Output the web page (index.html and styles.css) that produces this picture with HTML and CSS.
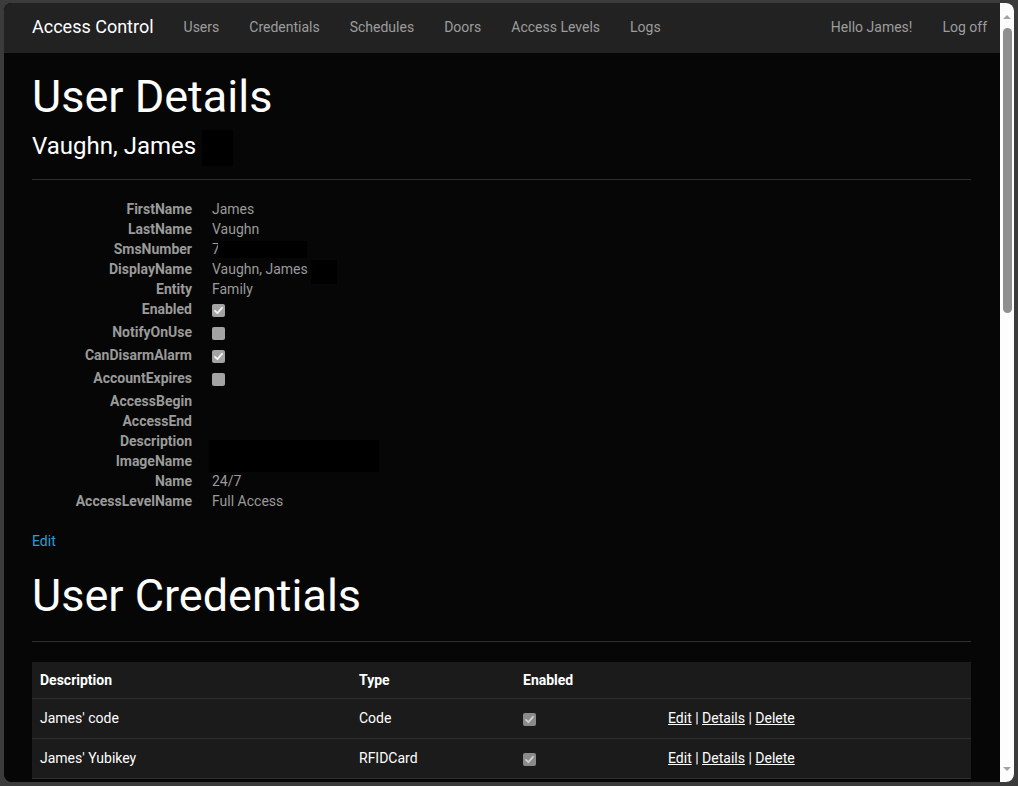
FILE: index.html
```html
<!DOCTYPE html>
<html lang="en">
<head>
<meta charset="utf-8">
<title>User Details - Access Control</title>
<link rel="stylesheet" href="styles.css">
</head>
<body>
<div class="window">
  <div class="page">
    <nav class="navbar">
      <a class="brand" href="#">Access Control</a>
      <ul class="nav">
        <li><a href="#">Users</a></li>
        <li><a href="#">Credentials</a></li>
        <li><a href="#">Schedules</a></li>
        <li><a href="#">Doors</a></li>
        <li><a href="#">Access Levels</a></li>
        <li><a href="#">Logs</a></li>
      </ul>
      <ul class="nav nav-right">
        <li><a href="#">Hello James!</a></li>
        <li><a href="#">Log off</a></li>
      </ul>
    </nav>
    <main class="container">
      <h1 class="title title-1">User Details</h1>
      <h3 class="subtitle">Vaughn, James <span class="redact redact-name"></span></h3>
      <hr class="rule">
      <dl class="details">
        <dt>FirstName</dt><dd>James</dd>
        <dt>LastName</dt><dd>Vaughn</dd>
        <dt>SmsNumber</dt><dd>7<span class="redact redact-sms"></span></dd>
        <dt>DisplayName</dt><dd>Vaughn, James<span class="redact redact-display"></span></dd>
        <dt>Entity</dt><dd>Family</dd>
        <dt class="cb-row">Enabled</dt><dd class="cb-row"><span class="check checked"><svg viewBox="0 0 13 13"><polyline points="3,6.8 5.4,9.2 10,3.8"/></svg></span></dd>
        <dt class="cb-row">NotifyOnUse</dt><dd class="cb-row"><span class="check"></span></dd>
        <dt class="cb-row">CanDisarmAlarm</dt><dd class="cb-row"><span class="check checked"><svg viewBox="0 0 13 13"><polyline points="3,6.8 5.4,9.2 10,3.8"/></svg></span></dd>
        <dt class="cb-row">AccountExpires</dt><dd class="cb-row"><span class="check"></span></dd>
        <dt>AccessBegin</dt><dd></dd>
        <dt>AccessEnd</dt><dd></dd>
        <dt>Description</dt><dd class="desc"><span class="redact redact-desc"></span></dd>
        <dt>ImageName</dt><dd></dd>
        <dt>Name</dt><dd>24/7</dd>
        <dt>AccessLevelName</dt><dd>Full Access</dd>
      </dl>
      <p class="edit-line"><a class="link" href="#">Edit</a></p>
      <h1 class="title title-2">User Credentials</h1>
      <hr class="rule">
      <table class="creds">
        <thead>
          <tr><th class="c-desc">Description</th><th class="c-type">Type</th><th class="c-en">Enabled</th><th class="c-act"></th></tr>
        </thead>
        <tbody>
          <tr>
            <td>James' code</td><td>Code</td>
            <td><span class="check small checked"><svg viewBox="0 0 13 13"><polyline points="3,6.8 5.4,9.2 10,3.8"/></svg></span></td>
            <td><a href="#">Edit</a> | <a href="#">Details</a> | <a href="#">Delete</a></td>
          </tr>
          <tr>
            <td>James' Yubikey</td><td>RFIDCard</td>
            <td><span class="check small checked"><svg viewBox="0 0 13 13"><polyline points="3,6.8 5.4,9.2 10,3.8"/></svg></span></td>
            <td><a href="#">Edit</a> | <a href="#">Details</a> | <a href="#">Delete</a></td>
          </tr>
        </tbody>
      </table>
    </main>
  </div>
  <div class="scrollbar">
    <span class="arrow arrow-up"></span>
    <span class="thumb"></span>
    <span class="arrow arrow-down"></span>
  </div>
</div>
</body>
</html>
```
FILE: styles.css
```css
* { box-sizing: border-box; }

html, body {
  margin: 0;
  padding: 0;
  height: 100%;
}

body {
  background: #3b3b3b;
  font-family: Roboto, "Liberation Sans", Arial, sans-serif;
  font-size: 14px;
  line-height: 20px;
  color: #999;
  padding: 3px 4px 4px 4px;
}

.window {
  display: flex;
  height: 779px;
  width: 1010px;
  border-radius: 8px;
  overflow: hidden;
  background: #060606;
}

.page {
  flex: 1;
  overflow: hidden;
  background: #060606;
}

/* navbar */
.navbar {
  height: 50px;
  background: #222;
  display: flex;
  align-items: flex-start;
  padding-left: 28px;
}

.brand {
  color: #fff;
  font-size: 18px;
  text-decoration: none;
  padding-right: 15px;
  line-height: 48px;
}

.nav {
  list-style: none;
  margin: 0;
  padding: 0;
  display: flex;
}

.nav a {
  display: block;
  padding: 0 15px;
  line-height: 48px;
  color: #9d9d9d;
  text-decoration: none;
  font-size: 14px;
}

.nav-right {
  margin-left: auto;
  margin-right: -2px;
}

/* content */
.container {
  padding: 0 29px 0 28px;
}

.title {
  font-size: 45px;
  font-weight: 400;
  line-height: 1.1;
  color: #fff;
  margin: 19px 0 10px;
}

.title-1 {
  margin-bottom: 11px;
}

.title-2 {
  margin-top: 20px;
  margin-bottom: 11px;
}

.subtitle {
  position: relative;
  font-size: 24px;
  font-weight: 400;
  line-height: 1.1;
  color: #fff;
  margin: 0;
}

.rule {
  border: 0;
  border-top: 1px solid #2f2f2f;
  margin: 20px 0;
  height: 0;
}

.title-2 + .rule {
  margin-top: 21px;
}

.redact {
  background: #000;
  display: inline-block;
  position: absolute;
}

.redact-name {
  left: 170px;
  top: -3px;
  width: 31px;
  height: 36px;
}

/* details list */
.details {
  display: grid;
  grid-template-columns: 160px 1fr;
  column-gap: 20px;
  margin: -1px 0 20px;
}

.details dt {
  font-weight: 700;
  text-align: right;
  color: #9a9a9a;
  height: 20px;
}

.details dd {
  margin: 0;
  height: 20px;
  position: relative;
  color: #9a9a9a;
}

.details .cb-row {
  height: 23px;
}

.redact-sms {
  left: 6px;
  top: 2px;
  width: 89px;
  height: 17px;
}

.redact-display {
  left: 99px;
  top: 1px;
  width: 26px;
  height: 24px;
}

.redact-desc {
  left: -3px;
  top: 9px;
  width: 170px;
  height: 32px;
}

.check {
  display: block;
  width: 13px;
  height: 13px;
  margin-top: 5px;
  background: #a3a3a3;
  border-radius: 2px;
}

.check svg {
  display: block;
  width: 13px;
  height: 13px;
}

.check polyline {
  fill: none;
  stroke: #f4f4f4;
  stroke-width: 1.8;
  stroke-linecap: round;
  stroke-linejoin: round;
}

.check.small {
  display: inline-block;
  vertical-align: middle;
  margin-top: 0;
  background: #8a8a8a;
}

.check.small polyline {
  stroke: #d0d0d0;
}

.edit-line {
  margin: 0;
  line-height: 20px;
}

.link {
  color: #2a9fd6;
  text-decoration: none;
}

/* table */
.creds {
  width: 100%;
  table-layout: fixed;
  border-collapse: collapse;
  background: #1b1b1b;
  color: #fff;
}

.creds th {
  text-align: left;
  font-weight: 700;
  padding: 8px;
  line-height: 20px;
  border-bottom: 1px solid #2e2e2e;
}

.creds td {
  padding: 9px 8px 10px;
  line-height: 20px;
  border-bottom: 1px solid #2e2e2e;
  vertical-align: middle;
}

.creds td a {
  color: #fff;
  text-decoration: underline;
}

.c-desc { width: 319px; }
.c-type { width: 164px; }
.c-en { width: 145px; }
.c-act { width: 311px; }

/* scrollbar */
.scrollbar {
  width: 14px;
  background: #fdfdfd;
  position: relative;
  display: flex;
  flex-direction: column;
  align-items: center;
}

.arrow {
  width: 0;
  height: 0;
  border-left: 4px solid transparent;
  border-right: 4px solid transparent;
}

.arrow-up {
  border-bottom: 4px solid #a3a3a3;
  margin-top: 12px;
}

.arrow-down {
  border-top: 4px solid #a3a3a3;
  margin-top: auto;
  margin-bottom: 11px;
}

.thumb {
  width: 9px;
  height: 285px;
  margin-top: 9px;
  background: #8f8f8f;
  border-radius: 5px;
}
```
